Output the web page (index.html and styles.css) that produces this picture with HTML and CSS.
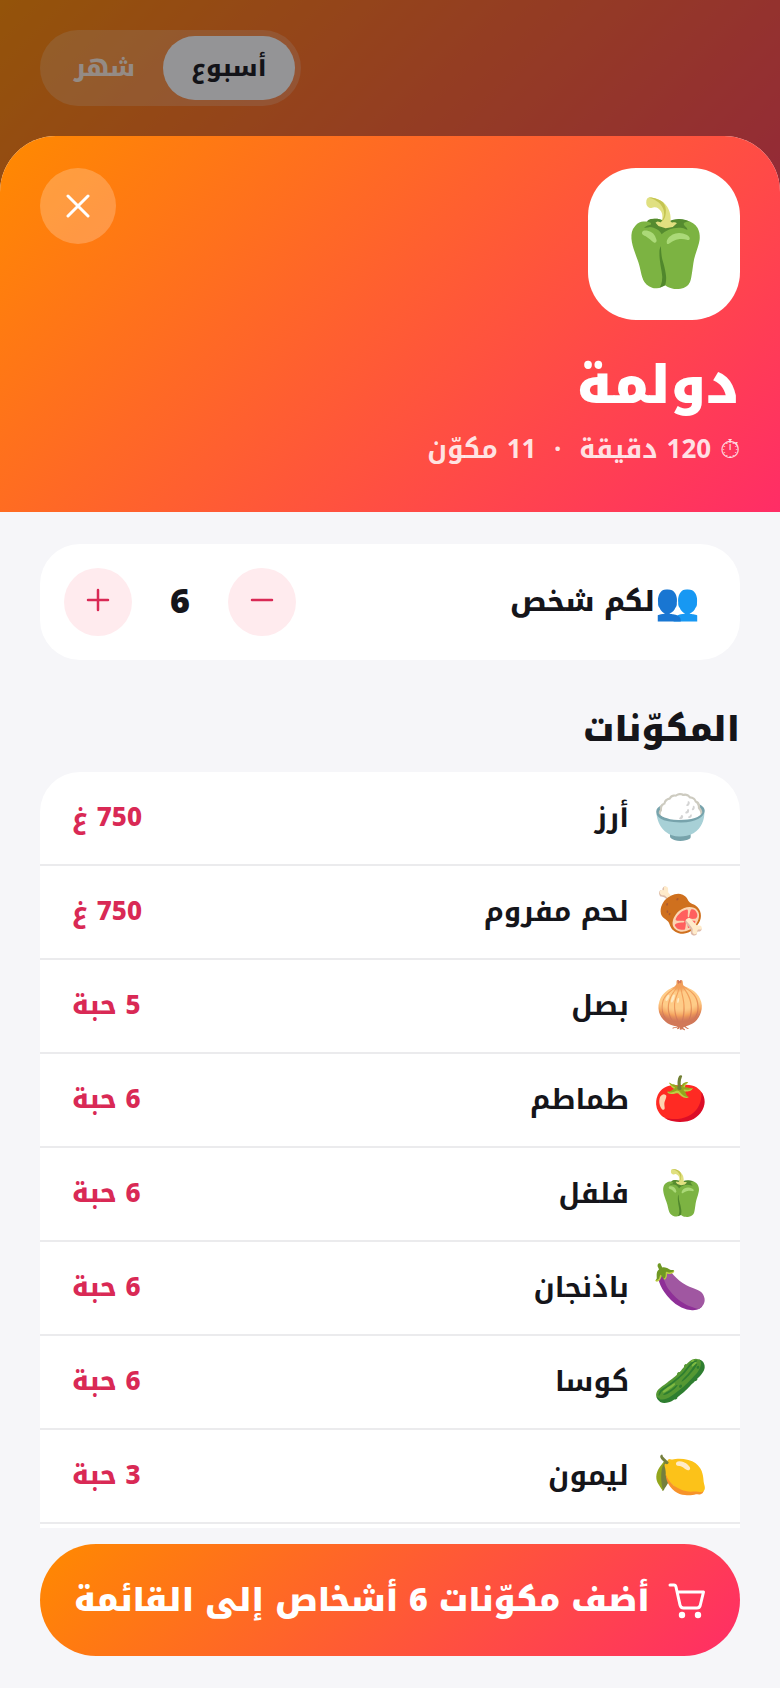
FILE: index.html
```html
<!DOCTYPE html>
<html lang="ar" dir="rtl">
<head>
    <meta charset="UTF-8">
    <meta name="viewport" content="width=device-width, initial-scale=1.0">
    <title>دولمة</title>
    <link rel="stylesheet" href="styles.css">
</head>
<body>
    <!-- Planner page behind the sheet -->
    <div class="planner">
        <div class="toggle">
            <button type="button" class="toggle-btn active">أسبوع</button>
            <button type="button" class="toggle-btn">شهر</button>
        </div>
    </div>
    <div class="overlay"></div>

    <!-- Recipe sheet -->
    <main class="sheet">
        <header class="sheet-header">
            <div class="header-top">
                <div class="recipe-icon">🫑</div>
                <button type="button" class="close-btn" aria-label="إغلاق">
                    <svg width="24" height="24" viewBox="0 0 24 24"><path d="M2 2L22 22M22 2L2 22"/></svg>
                </button>
            </div>
            <h1>دولمة</h1>
            <p class="meta"><span class="clock">⏱</span> 120 دقيقة &nbsp;·&nbsp; 11 مكوّن</p>
        </header>

        <div class="content">
            <section class="servings">
                <div class="servings-label"><span class="people">👥</span><span>لكم شخص</span></div>
                <div class="stepper">
                    <button type="button" class="step-btn" id="minus" aria-label="أقل">
                        <svg width="24" height="24" viewBox="0 0 24 24"><path d="M2 12H22"/></svg>
                    </button>
                    <output class="count" id="count">6</output>
                    <button type="button" class="step-btn" id="plus" aria-label="أكثر">
                        <svg width="24" height="24" viewBox="0 0 24 24"><path d="M2 12H22M12 2V22"/></svg>
                    </button>
                </div>
            </section>

            <h2>المكوّنات</h2>
            <ul class="ingredients">
                <li><span class="emoji">🍚</span><span class="name">أرز</span><span class="amount">750 غ</span></li>
                <li><span class="emoji">🍖</span><span class="name">لحم مفروم</span><span class="amount">750 غ</span></li>
                <li><span class="emoji">🧅</span><span class="name">بصل</span><span class="amount">5 حبة</span></li>
                <li><span class="emoji">🍅</span><span class="name">طماطم</span><span class="amount">6 حبة</span></li>
                <li><span class="emoji">🫑</span><span class="name">فلفل</span><span class="amount">6 حبة</span></li>
                <li><span class="emoji">🍆</span><span class="name">باذنجان</span><span class="amount">6 حبة</span></li>
                <li><span class="emoji">🥒</span><span class="name">كوسا</span><span class="amount">6 حبة</span></li>
                <li><span class="emoji">🍋</span><span class="name">ليمون</span><span class="amount">3 حبة</span></li>
            </ul>
        </div>

        <footer class="sheet-footer">
            <button type="button" class="add-btn">
                <svg class="cart" width="40" height="40" viewBox="0 0 40 40">
                    <path d="M4 4H8Q9.500 4 10 6L14 24Q14.700 27 17.500 27H31Q33.500 27 34.200 24.500L37.500 11H11.500"/>
                    <circle cx="16" cy="34" r="1.700"/>
                    <circle cx="32" cy="34" r="1.700"/>
                </svg>
                <span>أضف مكوّنات 6 أشخاص إلى القائمة</span>
            </button>
        </footer>
    </main>
</body>
</html>
```
FILE: styles.css
```css
* {
    box-sizing: border-box;
}

body {
    margin: 0;
    min-height: 100vh;
    display: flex;
    flex-direction: column;
    position: relative;
    font-family: "Noto Kufi Arabic", "Noto Sans", sans-serif;
    color: #15151a;
    background: linear-gradient(135deg, #ff8a00, #ff2d66) no-repeat;
    background-size: 100% 420px;
}

button {
    border: 0;
    padding: 0;
    font-family: inherit;
    color: inherit;
    cursor: pointer;
}

svg {
    display: block;
    fill: none;
    stroke: currentColor;
    stroke-width: 3;
    stroke-linecap: round;
    stroke-linejoin: round;
}

/* Page behind the sheet */
.planner {
    display: flex;
    justify-content: flex-end;
    padding: 30px 40px;
}

.toggle {
    display: flex;
    padding: 6px;
    border-radius: 38px;
    background: rgba(255, 255, 255, 0.2);
}

.toggle-btn {
    height: 64px;
    padding: 0 28px;
    border-radius: 32px;
    font-size: 24px;
    font-weight: 800;
    line-height: 40px;
    color: rgba(255, 255, 255, 0.85);
    background: transparent;
}

.toggle-btn.active {
    color: #15151a;
    background: #fff;
}

.overlay {
    position: absolute;
    inset: 0;
    background: rgba(17, 17, 22, 0.45);
}

/* Sheet */
.sheet {
    position: relative;
    flex: 1;
    display: flex;
    flex-direction: column;
    border-radius: 56px 56px 0 0;
    overflow: hidden;
    background: #f6f6f9;
}

.sheet-header {
    padding: 32px 40px 40px;
    color: #fff;
    background: linear-gradient(135deg, #ff8a00, #ff4e43 65%, #ff2d66);
}

.header-top {
    display: flex;
    justify-content: space-between;
    align-items: flex-start;
}

.recipe-icon {
    display: flex;
    align-items: center;
    justify-content: center;
    width: 152px;
    height: 152px;
    border-radius: 48px;
    font-size: 84px;
    line-height: 100px;
    background: #fff;
}

.close-btn {
    display: grid;
    place-items: center;
    width: 76px;
    height: 76px;
    border-radius: 50%;
    background: rgba(255, 255, 255, 0.22);
}

h1 {
    margin: 30px 0 0;
    font-size: 52px;
    font-weight: 900;
    line-height: 72px;
}

.meta {
    margin: 6px 0 0;
    font-size: 26px;
    font-weight: 700;
    line-height: 44px;
    color: rgba(255, 255, 255, 0.85);
}

.clock {
    font-weight: 400;
}

.content {
    flex: 1;
    display: flex;
    flex-direction: column;
    padding: 32px 40px 0;
}

.servings {
    display: flex;
    align-items: center;
    justify-content: space-between;
    padding: 24px;
    padding-inline-start: 40px;
    border-radius: 40px;
    background: #fff;
}

.servings-label {
    display: flex;
    align-items: center;
    font-size: 28px;
    font-weight: 800;
    line-height: 48px;
}

.people {
    font-size: 36px;
}

.stepper {
    display: flex;
    align-items: center;
}

.step-btn {
    display: grid;
    place-items: center;
    width: 68px;
    height: 68px;
    padding-bottom: 4px;
    border-radius: 50%;
    color: #d92955;
    background: #ffebee;
}

.step-btn svg {
    stroke-width: 2.5;
}

.count {
    width: 96px;
    text-align: center;
    font-size: 34px;
    font-weight: 900;
    line-height: 48px;
}

h2 {
    margin: 42px 0 14px;
    font-size: 34px;
    font-weight: 900;
    line-height: 56px;
}

.ingredients {
    flex: 1;
    margin: 0;
    padding: 0 0 4px;
    list-style: none;
    border-radius: 40px 40px 0 0;
    background: #fff;
}

.ingredients li {
    display: flex;
    align-items: center;
    gap: 24px;
    height: 94px;
    padding: 0 32px;
    border-bottom: 2px solid #ebebed;
}

.emoji {
    font-size: 44px;
    line-height: 60px;
}

.name {
    flex: 1;
    font-size: 28px;
    font-weight: 700;
    line-height: 48px;
}

.amount {
    font-size: 26px;
    font-weight: 800;
    line-height: 48px;
    color: #d92955;
}

.sheet-footer {
    padding: 16px 40px 32px;
}

.add-btn {
    display: flex;
    align-items: center;
    justify-content: center;
    gap: 16px;
    width: 100%;
    height: 112px;
    padding-top: 2px;
    border-radius: 56px;
    font-size: 32px;
    font-weight: 900;
    line-height: 56px;
    color: #fff;
    background: linear-gradient(135deg, #ff8a00, #ff2d66);
}

.cart circle {
    fill: currentColor;
}
```
